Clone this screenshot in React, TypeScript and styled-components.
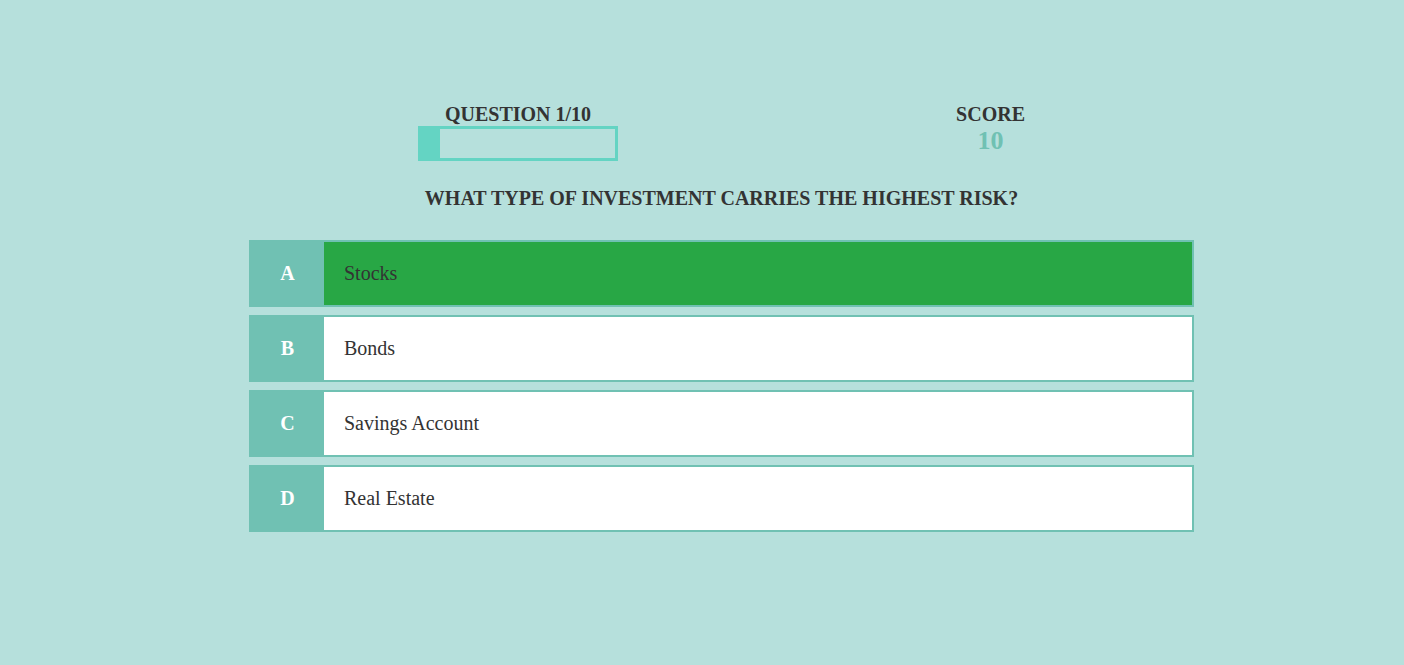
import React from "react";
import styled, { createGlobalStyle } from "styled-components";

const Global = createGlobalStyle`
  html, body {
    margin: 0;
    padding: 0;
    background: #b6e0dc;
    font-family: "Liberation Serif", "Times New Roman", serif;
    color: #333;
  }
`;

const Page = styled.div`
  min-height: 665px;
  display: flex;
  justify-content: center;
  padding: 103px 0 0 39px;
  box-sizing: border-box;
`;

const Quiz = styled.div`
  width: 945px;
  display: flex;
  flex-direction: column;
`;

const Header = styled.div`
  display: flex;
  justify-content: space-around;
  align-items: flex-start;
`;

const Block = styled.div`
  display: flex;
  flex-direction: column;
  align-items: center;
`;

const Label = styled.div`
  font-weight: bold;
  font-size: 20px;
  line-height: 23px;
  color: #333;
`;

const Progress = styled.div`
  width: 200px;
  height: 35px;
  box-sizing: border-box;
  border: 3px solid #64d4c3;
  display: flex;
`;

const Fill = styled.div`
  background: #64d4c3;
  height: 100%;
`;

const ScoreValue = styled.div`
  font-weight: bold;
  font-size: 26px;
  line-height: 30px;
  color: #70c1b3;
`;

const Question = styled.h2`
  margin: 26px 0 0;
  text-align: center;
  font-weight: bold;
  font-size: 20px;
  line-height: 23px;
  color: #333;
`;

const Options = styled.div`
  margin-top: 30px;
  display: flex;
  flex-direction: column;
  gap: 8px;
`;

const Option = styled.div<{ $correct?: boolean }>`
  display: flex;
  height: 67px;
  box-sizing: border-box;
  border: 2px solid #70c1b3;
  background: ${(p) => (p.$correct ? "#28a745" : "#ffffff")};
`;

const Letter = styled.div`
  width: 73px;
  flex: none;
  background: #70c1b3;
  color: #fff;
  font-weight: bold;
  font-size: 20px;
  display: flex;
  align-items: center;
  justify-content: center;
`;

const AnswerText = styled.div`
  padding-left: 20px;
  font-size: 20px;
  color: #333;
  display: flex;
  align-items: center;
`;

const answers = [
  { letter: "A", text: "Stocks", correct: true },
  { letter: "B", text: "Bonds" },
  { letter: "C", text: "Savings Account" },
  { letter: "D", text: "Real Estate" },
];

export default function App() {
  const progress = 10;
  return (
    <>
      <Global />
      <Page>
        <Quiz>
          <Header>
            <Block>
              <Label>QUESTION 1/10</Label>
              <Progress>
                <Fill style={{ width: `${progress}%` }} />
              </Progress>
            </Block>
            <Block>
              <Label>SCORE</Label>
              <ScoreValue>10</ScoreValue>
            </Block>
          </Header>
          <Question>WHAT TYPE OF INVESTMENT CARRIES THE HIGHEST RISK?</Question>
          <Options>
            {answers.map((a) => (
              <Option key={a.letter} $correct={a.correct}>
                <Letter>{a.letter}</Letter>
                <AnswerText>{a.text}</AnswerText>
              </Option>
            ))}
          </Options>
        </Quiz>
      </Page>
    </>
  );
}
